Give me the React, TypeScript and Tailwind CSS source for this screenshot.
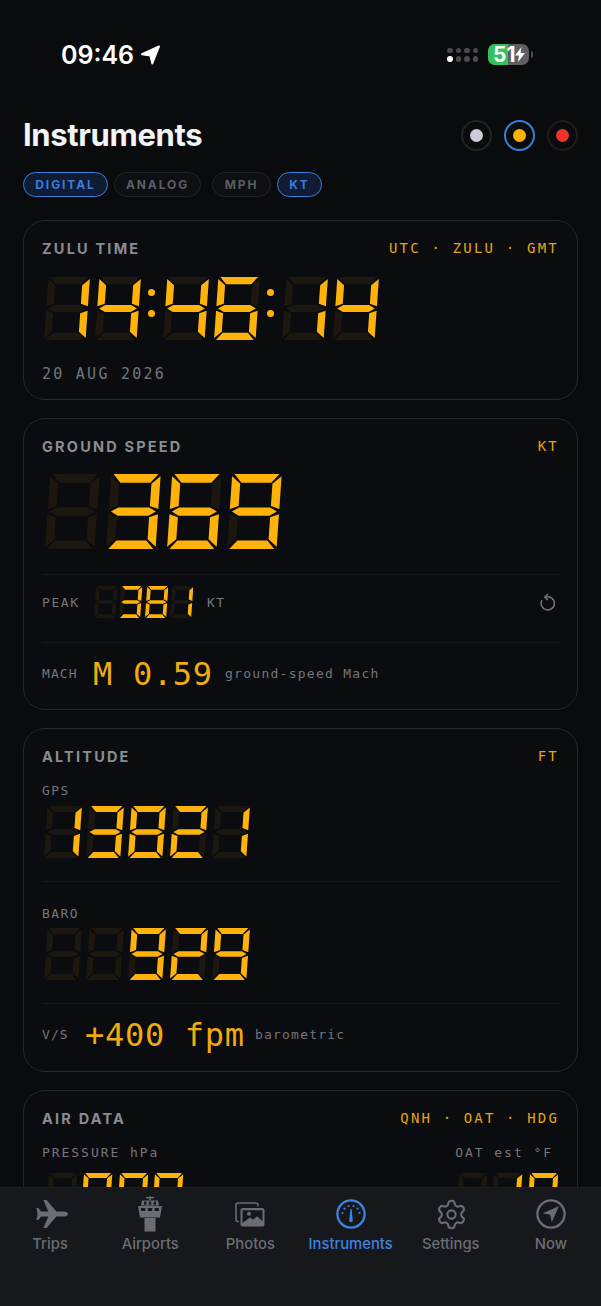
import React from "react";
import { Settings } from "lucide-react";

const W = 66;
const H = 100;
const T = 11.5;
const SK = 0.07;
const SEGS: Record<string, number[][]> = {
  a: [[3, 0], [W - 3, 0], [W - T - 1.5, T], [T + 1.5, T]],
  b: [[W, 3], [W, 46.5], [W - T, 42.5], [W - T, T + 1.5]],
  c: [[W, 53.5], [W, 97], [W - T, H - T - 1.5], [W - T, 57.5]],
  d: [[T + 1.5, H - T], [W - T - 1.5, H - T], [W - 3, H], [3, H]],
  e: [[0, 53.5], [T, 57.5], [T, H - T - 1.5], [0, 97]],
  f: [[0, 3], [T, T + 1.5], [T, 42.5], [0, 46.5]],
  g: [[3, 50], [T + 1, 44.5], [W - T - 1, 44.5], [W - 3, 50], [W - T - 1, 55.5], [T + 1, 55.5]],
};
const MAP: Record<string, string> = {
  "0": "abcdef", "1": "bc", "2": "abged", "3": "abgcd", "4": "fgbc",
  "5": "afgcd", "6": "afgedc", "7": "abc", "8": "abcdefg", "9": "abcdfg", " ": "",
};
const pts = (p: number[][]) => p.map(([x, y]) => `${x + (H - y) * SK},${y}`).join(" ");

function Digit({ c, h }: { c: string; h: number }) {
  const on = MAP[c] ?? "";
  return (
    <svg width={h * 0.73} height={h} viewBox="0 0 73 100" className="shrink-0 block">
      {Object.keys(SEGS).map((k) => (
        <polygon key={k} points={pts(SEGS[k])} fill={on.includes(k) ? "#ffb30a" : "#1c1810"} />
      ))}
    </svg>
  );
}

function Seven({ v, h, gap, className = "" }: { v: string; h: number; gap: string; className?: string }) {
  return (
    <div className={`flex ${gap} ${className}`} role="img" aria-label={v.trim()}>
      {v.split("").map((c, i) => (
        <Digit key={i} c={c} h={h} />
      ))}
    </div>
  );
}

function Colon() {
  return (
    <div className="w-[12px] h-[63px] flex flex-col items-center pt-[12px] gap-[14px] shrink-0">
      <div className="w-[7px] h-[7px] rounded-full bg-[#ffb30a]" />
      <div className="w-[7px] h-[7px] rounded-full bg-[#ffb30a]" />
    </div>
  );
}

const SANS = "font-['Inter',sans-serif]";
const MONO = "font-['DejaVu_Sans_Mono',monospace]";

function CardHead({ title, right, trackRight = "tracking-[2.2px]" }: { title: string; right: string; trackRight?: string }) {
  return (
    <div className="flex justify-between items-center h-[20px]">
      <span className={`${SANS} pt-[2px] text-[14.5px] font-bold tracking-[2.2px] text-[#8a8c91]`}>{title}</span>
      <span className={`${MONO} text-[14px] ${trackRight} text-[#e5a50f] whitespace-pre`}>{right}</span>
    </div>
  );
}

function Chip({ label, active, w }: { label: string; active?: boolean; w: string }) {
  return (
    <div
      className={`${w} h-[25px] rounded-full border-[1.5px] flex items-center justify-center ${SANS} text-[12px] font-bold tracking-[1.9px] ${
        active ? "border-[#3b7ddd] bg-[#0f1c33] text-[#3b7ddd]" : "border-[#232427] bg-[#0e0f12] text-[#5c5e63]"
      }`}
    >
      {label}
    </div>
  );
}

function Swatch({ color, active, tint }: { color: string; active?: boolean; tint: string }) {
  return (
    <div className={`w-[31px] h-[31px] rounded-full flex items-center justify-center border-[2.5px] ${active ? "border-[#3b7ddd]" : tint}`}>
      <div className="w-[13px] h-[13px] rounded-full" style={{ backgroundColor: color }} />
    </div>
  );
}

const GRAY = "#6b6d73";
const BLUE = "#3f82e0";

function PlaneIcon() {
  return (
    <svg className="ml-[3px]" width="32" height="28" viewBox="0 0 32 28" fill={GRAY}>
      <path d="M32 14c0-1.5-2-2.6-4-2.6h-7.6L10.6 0H7.4l4.9 11.4H5.2L2.3 8H0.4l1.2 6-1.2 6h1.9l2.9-3.4h7.1L7.4 28h3.2l9.8-11.4H28c2 0 4-1.1 4-2.6z" />
    </svg>
  );
}

function TowerIcon() {
  return (
    <svg width="26" height="36" viewBox="0 0 26 36" fill={GRAY}>
      <rect x="12.2" y="0" width="1.6" height="4" />
      <rect x="9" y="1" width="8" height="1.4" />
      <path d="M5 4.5h16l1 5H4z" />
      <path d="M1 10h24l-2 11.5H3z" />
      <rect x="7" y="5.6" width="2.4" height="3" fill="#16181c" />
      <rect x="11.8" y="5.6" width="2.4" height="3" fill="#16181c" />
      <rect x="16.6" y="5.6" width="2.4" height="3" fill="#16181c" />
      <rect x="4" y="12" width="4.4" height="3" fill="#16181c" />
      <rect x="10.8" y="12" width="4.4" height="3" fill="#16181c" />
      <rect x="17.6" y="12" width="4.4" height="3" fill="#16181c" />
      <path d="M7.5 22h11v13.5h-11z" />
    </svg>
  );
}

function PhotosIcon() {
  return (
    <svg width="30" height="25" viewBox="0 0 30 25" fill="none">
      <path d="M4 19.5H3a2 2 0 0 1-2-2V3a2 2 0 0 1 2-2h18a2 2 0 0 1 2 2v1.5" stroke={GRAY} strokeWidth="1.6" />
      <rect x="5.5" y="6" width="24" height="18.6" rx="2.6" fill={GRAY} />
      <path d="M7.5 8.2h20v11l-5.5-5-4 3.6-3-2.3-7.5 5.6z" fill="#16181c" />
      <circle cx="14" cy="11.8" r="2" fill={GRAY} />
    </svg>
  );
}

function GaugeIcon() {
  return (
    <svg width="30" height="30" viewBox="0 0 30 30" fill="none">
      <circle cx="15" cy="15" r="13.6" stroke={BLUE} strokeWidth="2.3" />
      <path d="M13.2 21.5 14.4 10h1.2l1.2 11.5a1.8 1.8 0 1 1-3.6 0z" fill={BLUE} />
      {[[6.5, 14], [8.5, 9.6], [12.5, 7], [17.5, 7], [21.5, 9.6], [23.5, 14]].map(([x, y]) => (
        <circle key={x} cx={x} cy={y} r="1.1" fill={BLUE} />
      ))}
    </svg>
  );
}

function NowIcon() {
  return (
    <svg width="30" height="30" viewBox="0 0 30 30" fill="none">
      <circle cx="15" cy="15" r="13.6" stroke={GRAY} strokeWidth="2.3" />
      <path d="M22.8 7.2 6.8 14.2l7.4 1.6 1.6 7.4z" fill={GRAY} />
    </svg>
  );
}

function Tab({ label, active, children }: { label: string; active?: boolean; children: React.ReactNode }) {
  return (
    <div className="flex flex-col items-center">
      <div className="h-[36px] flex items-center justify-center">{children}</div>
      <span className={`mt-[2px] ${SANS} text-[14.8px] font-medium leading-[20px] ${active ? "text-[#3f82e0]" : "text-[#6b6d73]"}`}>{label}</span>
    </div>
  );
}

const Divider = () => <div className="h-px bg-[#15171a]" />;
const CARD = "mx-[23px] rounded-[22px] border border-[#26282c] bg-[#0b0c0f] px-[18px]";
const LABEL = "text-[13px] text-[#74767b]";

export default function App() {
  return (
    <div className="w-[601px] h-[1306px] bg-[#0a0b0d] flex flex-col overflow-hidden">
      <main className="flex-1 min-h-0 overflow-hidden">
        {/* status bar */}
        <div className="h-[110px] flex items-start justify-between pl-[61px] pr-[68px] pt-[39px]">
          <div className="flex items-center gap-[6px]">
            <span className={`${SANS} text-[25px] font-semibold leading-[32px] text-white`}>09:46</span>
            <svg width="21" height="20" viewBox="0 0 21 20" fill="#fff" stroke="#fff" strokeWidth="2" strokeLinejoin="round">
              <path d="M19 1.5 2 9.2l8.4 1.4 1.9 7.9z" />
            </svg>
          </div>
          <div className="flex items-center gap-[10px] pt-[5px]">
            <div className="grid grid-cols-4 gap-x-[3px] gap-y-[3px]">
              {[0, 1, 2, 3, 4, 5, 6, 7].map((i) => (
                <div key={i} className={`w-[5.5px] h-[5.5px] rounded-full ${i === 4 ? "bg-white" : "bg-[#4a4b4d]"}`} />
              ))}
            </div>
            <div className="flex items-center gap-[2px]">
              <div className="w-[41px] h-[21px] rounded-[7px] flex bg-[#5e5f61] relative">
                <div className="w-[20px] rounded-l-[7px] bg-[#34c05a]" />
                <span className={`absolute left-[5px] top-0 ${SANS} text-[21px] font-bold leading-[21px] text-white`}>51</span>
                <svg className="absolute left-[27px] top-[3px]" width="10" height="15" viewBox="0 0 10 15" fill="#fff">
                  <path d="M6.5 0 0 8.6h4L3 15l7-9H5.6z" />
                </svg>
              </div>
              <div className="w-[2px] h-[7px] rounded-r-full bg-[#4a4b4d]" />
            </div>
          </div>
        </div>

        {/* title */}
        <div className="h-[50px] px-[23px] flex items-center justify-between">
          <h1 className={`${SANS} text-[31px] font-bold tracking-[-0.35px] text-[#f3f4f6]`}>Instruments</h1>
          <div className="flex gap-[12px]">
            <Swatch color="#c9ced8" tint="border-[#222326]" />
            <Swatch color="#ffb30a" active tint="" />
            <Swatch color="#f0332c" tint="border-[#221b1a]" />
          </div>
        </div>

        {/* chips */}
        <div className="flex px-[23px] mt-[12px]">
          <Chip label="DIGITAL" active w="w-[85px]" />
          <div className="ml-[6px]"><Chip label="ANALOG" w="w-[87px]" /></div>
          <div className="ml-[11px]"><Chip label="MPH" w="w-[59px]" /></div>
          <div className="ml-[6px]"><Chip label="KT" active w="w-[45px]" /></div>
        </div>

        {/* Zulu */}
        <section className={`${CARD} mt-[23px] h-[180px] pt-[17px]`}>
          <CardHead title="ZULU TIME" right="UTC · ZULU · GMT" />
          <div className="flex gap-[5px] ml-[2px] mt-[19px]" role="img" aria-label="14:46:14">
            <Digit c="1" h={63} /><Digit c="4" h={63} />
            <Colon />
            <Digit c="4" h={63} /><Digit c="6" h={63} />
            <Colon />
            <Digit c="1" h={63} /><Digit c="4" h={63} />
          </div>
          <div className={`${MONO} mt-[24px] text-[15px] leading-[20px] tracking-[2.25px] text-[#74767b]`}>20 AUG 2026</div>
        </section>

        {/* Ground speed */}
        <section className={`${CARD} mt-[18px] h-[292px] pt-[17px]`}>
          <CardHead title="GROUND SPEED" right="KT" />
          <Seven v=" 369" h={75} gap="gap-[6px]" className="ml-[3px] mt-[18px]" />
          <div className="mt-[25px]"><Divider /></div>
          <div className="h-[67px] flex items-start pt-[11px]">
            <span className={`${MONO} ${LABEL} w-[52px] leading-[33px] tracking-[1.6px]`}>PEAK</span>
            <Seven v=" 381" h={32} gap="gap-[2px]" className="w-[113px]" />
            <span className={`${MONO} ${LABEL} leading-[33px] tracking-[1.4px]`}>KT</span>
            <svg className="ml-auto mr-[3px] mt-[7px]" width="16" height="18" viewBox="0 0 16 18" fill="none" stroke="#74767b" strokeWidth="1.5">
              <path d="M5.6 4.1a6.6 6.6 0 1 1-3.6 3" />
              <path d="M7.8 1 4.8 4.2l3 2.7" />
            </svg>
          </div>
          <Divider />
          <div className="h-[62px] flex items-center">
            <span className={`${MONO} ${LABEL} w-[51px] tracking-[1.1px]`}>MACH</span>
            <span className={`${MONO} w-[132px] text-[32px] tracking-[0.7px] text-[#f0ab0c] whitespace-pre`}>M 0.59</span>
            <span className={`${MONO} ${LABEL} tracking-[1.27px] whitespace-pre`}>ground-speed Mach</span>
          </div>
        </section>

        {/* Altitude */}
        <section className={`${CARD} mt-[18px] h-[344px] pt-[17px]`}>
          <CardHead title="ALTITUDE" right="FT" />
          <div className={`${MONO} ${LABEL} mt-[17px] leading-[16px] tracking-[1.4px]`}>GPS</div>
          <Seven v="13821" h={52} gap="gap-[4px]" className="ml-[2px] mt-[7px]" />
          <div className="mt-[23px]"><Divider /></div>
          <div className={`${MONO} ${LABEL} mt-[24px] leading-[16px] tracking-[1.4px]`}>BARO</div>
          <Seven v="  929" h={52} gap="gap-[4px]" className="ml-[2px] mt-[6px]" />
          <div className="mt-[23px]"><Divider /></div>
          <div className="h-[62px] flex items-center">
            <span className={`${MONO} ${LABEL} w-[43px] tracking-[1.1px]`}>V/S</span>
            <span className={`${MONO} w-[170px] text-[32px] tracking-[0.7px] text-[#f0ab0c] whitespace-pre`}>+400 fpm</span>
            <span className={`${MONO} ${LABEL} tracking-[1.2px]`}>barometric</span>
          </div>
        </section>

        {/* Air data */}
        <section className={`${CARD} mt-[18px] h-[300px] pt-[17px]`}>
          <CardHead title="AIR DATA" right="QNH · OAT · HDG" trackRight="tracking-[2.15px]" />
          <div className="flex justify-between mt-[17px]">
            <div>
              <div className={`${MONO} ${LABEL} leading-[16px] tracking-[1.95px]`}>PRESSURE hPa</div>
              <Seven v=" 000" h={43} gap="gap-[4px]" className="ml-[4px] mt-[12px]" />
            </div>
            <div className="flex flex-col items-end">
              <div className={`${MONO} ${LABEL} leading-[16px] tracking-[1.95px] mr-[6px]`}>OAT est °F</div>
              <Seven v=" 10" h={43} gap="gap-[4px]" className="mt-[12px] mr-[1px]" />
            </div>
          </div>
        </section>
      </main>

      {/* tab bar */}
      <nav className="h-[119px] shrink-0 bg-[#16181c] border-t border-[#1e2024] grid grid-cols-6 pt-[8px]">
        <Tab label="Trips"><PlaneIcon /></Tab>
        <Tab label="Airports"><TowerIcon /></Tab>
        <Tab label="Photos"><PhotosIcon /></Tab>
        <Tab label="Instruments" active><GaugeIcon /></Tab>
        <Tab label="Settings"><div className="ml-[1px]"><Settings size={33} strokeWidth={1.5} color={GRAY} /></div></Tab>
        <Tab label="Now"><NowIcon /></Tab>
      </nav>
    </div>
  );
}
